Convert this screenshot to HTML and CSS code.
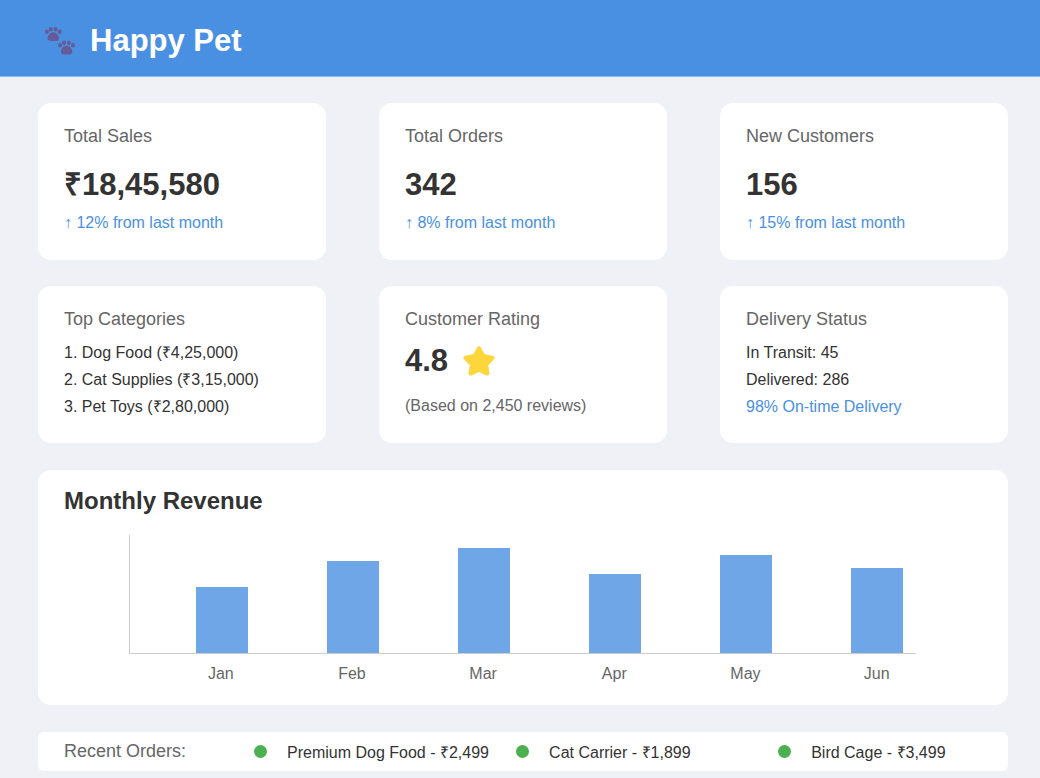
FILE: index.html
```html
<!DOCTYPE html>
<html lang="en">
<head>
<meta charset="utf-8">
<meta name="viewport" content="width=device-width, initial-scale=1">
<title>Happy Pet</title>
<link rel="stylesheet" href="styles.css">
</head>
<body>
<header class="header">
  <svg class="paws" viewBox="0 0 32 30" aria-hidden="true">
    <defs>
      <g id="paw">
        <ellipse cx="2.8" cy="5.7" rx="2" ry="2.3"/>
        <ellipse cx="6.8" cy="3.3" rx="2" ry="2.3"/>
        <ellipse cx="11.6" cy="3.3" rx="2" ry="2.3"/>
        <ellipse cx="15.7" cy="5.7" rx="2" ry="2.3"/>
        <path d="M9.3 6.2C11.8 6.2 13.2 7.6 14.2 9.4C15.5 11.6 15.3 13.6 13.8 14.5C12.5 15.3 6.1 15.3 4.8 14.5C3.3 13.6 3.1 11.6 4.4 9.4C5.4 7.6 6.8 6.2 9.3 6.2Z"/>
      </g>
    </defs>
    <use href="#paw"/>
    <use href="#paw" x="13.3" y="13.5"/>
  </svg>
  <h1 class="brand">Happy Pet</h1>
</header>
<main class="main">
  <div class="cards">
    <section class="card">
      <h2 class="card-title">Total Sales</h2>
      <p class="value value-spaced">₹18,45,580</p>
      <p class="line accent">↑ 12% from last month</p>
    </section>
    <section class="card">
      <h2 class="card-title">Total Orders</h2>
      <p class="value value-spaced">342</p>
      <p class="line accent">↑ 8% from last month</p>
    </section>
    <section class="card">
      <h2 class="card-title">New Customers</h2>
      <p class="value value-spaced">156</p>
      <p class="line accent">↑ 15% from last month</p>
    </section>
    <section class="card">
      <h2 class="card-title">Top Categories</h2>
      <ol class="lines ranked">
        <li class="line">Dog Food (₹4,25,000)</li>
        <li class="line">Cat Supplies (₹3,15,000)</li>
        <li class="line">Pet Toys (₹2,80,000)</li>
      </ol>
    </section>
    <section class="card">
      <h2 class="card-title">Customer Rating</h2>
      <div class="rating">
        <p class="value">4.8</p>
        <svg class="star" viewBox="0 0 32 30" aria-hidden="true">
          <path d="M16 2.5L20.3 10.2L29.4 11.8L23 18.4L24.3 27.4L16 23.6L7.7 27.4L9 18.4L2.6 11.8L11.7 10.2Z" fill="#fdd63b" stroke="#fdd63b" stroke-width="4.4" stroke-linejoin="round"/>
        </svg>
      </div>
      <p class="line muted">(Based on 2,450 reviews)</p>
    </section>
    <section class="card">
      <h2 class="card-title">Delivery Status</h2>
      <div class="lines">
        <p class="line">In Transit: 45</p>
        <p class="line">Delivered: 286</p>
        <p class="line accent">98% On-time Delivery</p>
      </div>
    </section>
  </div>
  <section class="panel">
    <h2 class="panel-title">Monthly Revenue</h2>
    <div class="chart">
      <div class="bars">
        <div class="bar" style="height:56%"></div>
        <div class="bar" style="height:78%"></div>
        <div class="bar" style="height:89%"></div>
        <div class="bar" style="height:67%"></div>
        <div class="bar" style="height:83%"></div>
        <div class="bar" style="height:72%"></div>
      </div>
      <div class="months">
        <span class="month">Jan</span>
        <span class="month">Feb</span>
        <span class="month">Mar</span>
        <span class="month">Apr</span>
        <span class="month">May</span>
        <span class="month">Jun</span>
      </div>
    </div>
  </section>
  <section class="orders">
    <h2 class="card-title">Recent Orders:</h2>
    <ul class="order-list">
      <li class="order">Premium Dog Food - ₹2,499</li>
      <li class="order">Cat Carrier - ₹1,899</li>
      <li class="order">Bird Cage - ₹3,499</li>
    </ul>
  </section>
</main>
</body>
</html>
```
FILE: styles.css
```css
* {
  box-sizing: border-box;
  margin: 0;
  padding: 0;
}

body {
  background: #f0f1f6;
  color: #333;
  font-family: "Liberation Sans", Arial, sans-serif;
  font-size: 16px;
}

.header {
  display: flex;
  align-items: center;
  gap: 14px;
  padding: 22px 44px 16px;
  background: #4a90e2;
  border-bottom: 1px solid #8bb8ec;
}

.paws {
  width: 32px;
  height: 30px;
  fill: #665b99;
}

.brand {
  color: #fff;
  font-size: 31px;
  line-height: 38px;
}

.main {
  display: flex;
  flex-direction: column;
  gap: 27px;
  padding: 26px 32px 7px 38px;
}

.cards {
  display: grid;
  grid-template-columns: repeat(3, 1fr);
  grid-auto-rows: 1fr;
  gap: 26px 53px;
}

.card {
  padding: 21px 26px 23px;
  border-radius: 13px;
  background: #fff;
}

.card-title {
  color: #666;
  font-size: 18px;
  font-weight: 400;
  line-height: 24px;
}

.value {
  font-size: 31px;
  font-weight: 700;
  line-height: 36px;
}

.value-spaced {
  margin: 19px 0 6px;
}

.line {
  line-height: 27px;
}

.lines {
  margin-top: 8px;
}

.ranked {
  list-style: none;
  counter-reset: rank;
}

.ranked .line::before {
  counter-increment: rank;
  content: counter(rank) ". ";
}

.accent {
  color: #4a90e2;
}

.muted {
  color: #666;
}

.rating {
  display: flex;
  align-items: center;
  gap: 15px;
  margin: 12px 0 13px;
}

.star {
  width: 32px;
  height: 30px;
}

.panel {
  padding: 15px 26px 18px;
  border-radius: 13px;
  background: #fff;
}

.panel-title {
  font-size: 24px;
  line-height: 32px;
}

.chart {
  margin: 18px 66px 0 65px;
}

.bars,
.months {
  display: grid;
  grid-template-columns: repeat(6, 1fr);
}

.bars {
  height: 119px;
  align-items: end;
  border-left: 1px solid #ccc;
  border-bottom: 1px solid #ccc;
}

.bar {
  width: 40%;
  margin-left: 50%;
  background: #6ea6e8;
}

.months {
  margin-top: 7px;
}

.month {
  width: 40%;
  margin-left: 50%;
  color: #666;
  line-height: 26px;
  text-align: center;
}

.orders {
  display: flex;
  align-items: center;
  padding: 0 26px;
  border-radius: 6px;
  background: #fff;
}

.orders .card-title {
  flex: 0 0 190px;
  line-height: 39px;
}

.order-list {
  display: grid;
  flex: 1;
  grid-template-columns: repeat(2, 36%) 1fr;
  list-style: none;
}

.order {
  display: flex;
  align-items: center;
  gap: 20px;
  white-space: nowrap;
}

.order::before {
  width: 13px;
  height: 13px;
  border-radius: 50%;
  background: #4caf50;
  content: "";
}
```
